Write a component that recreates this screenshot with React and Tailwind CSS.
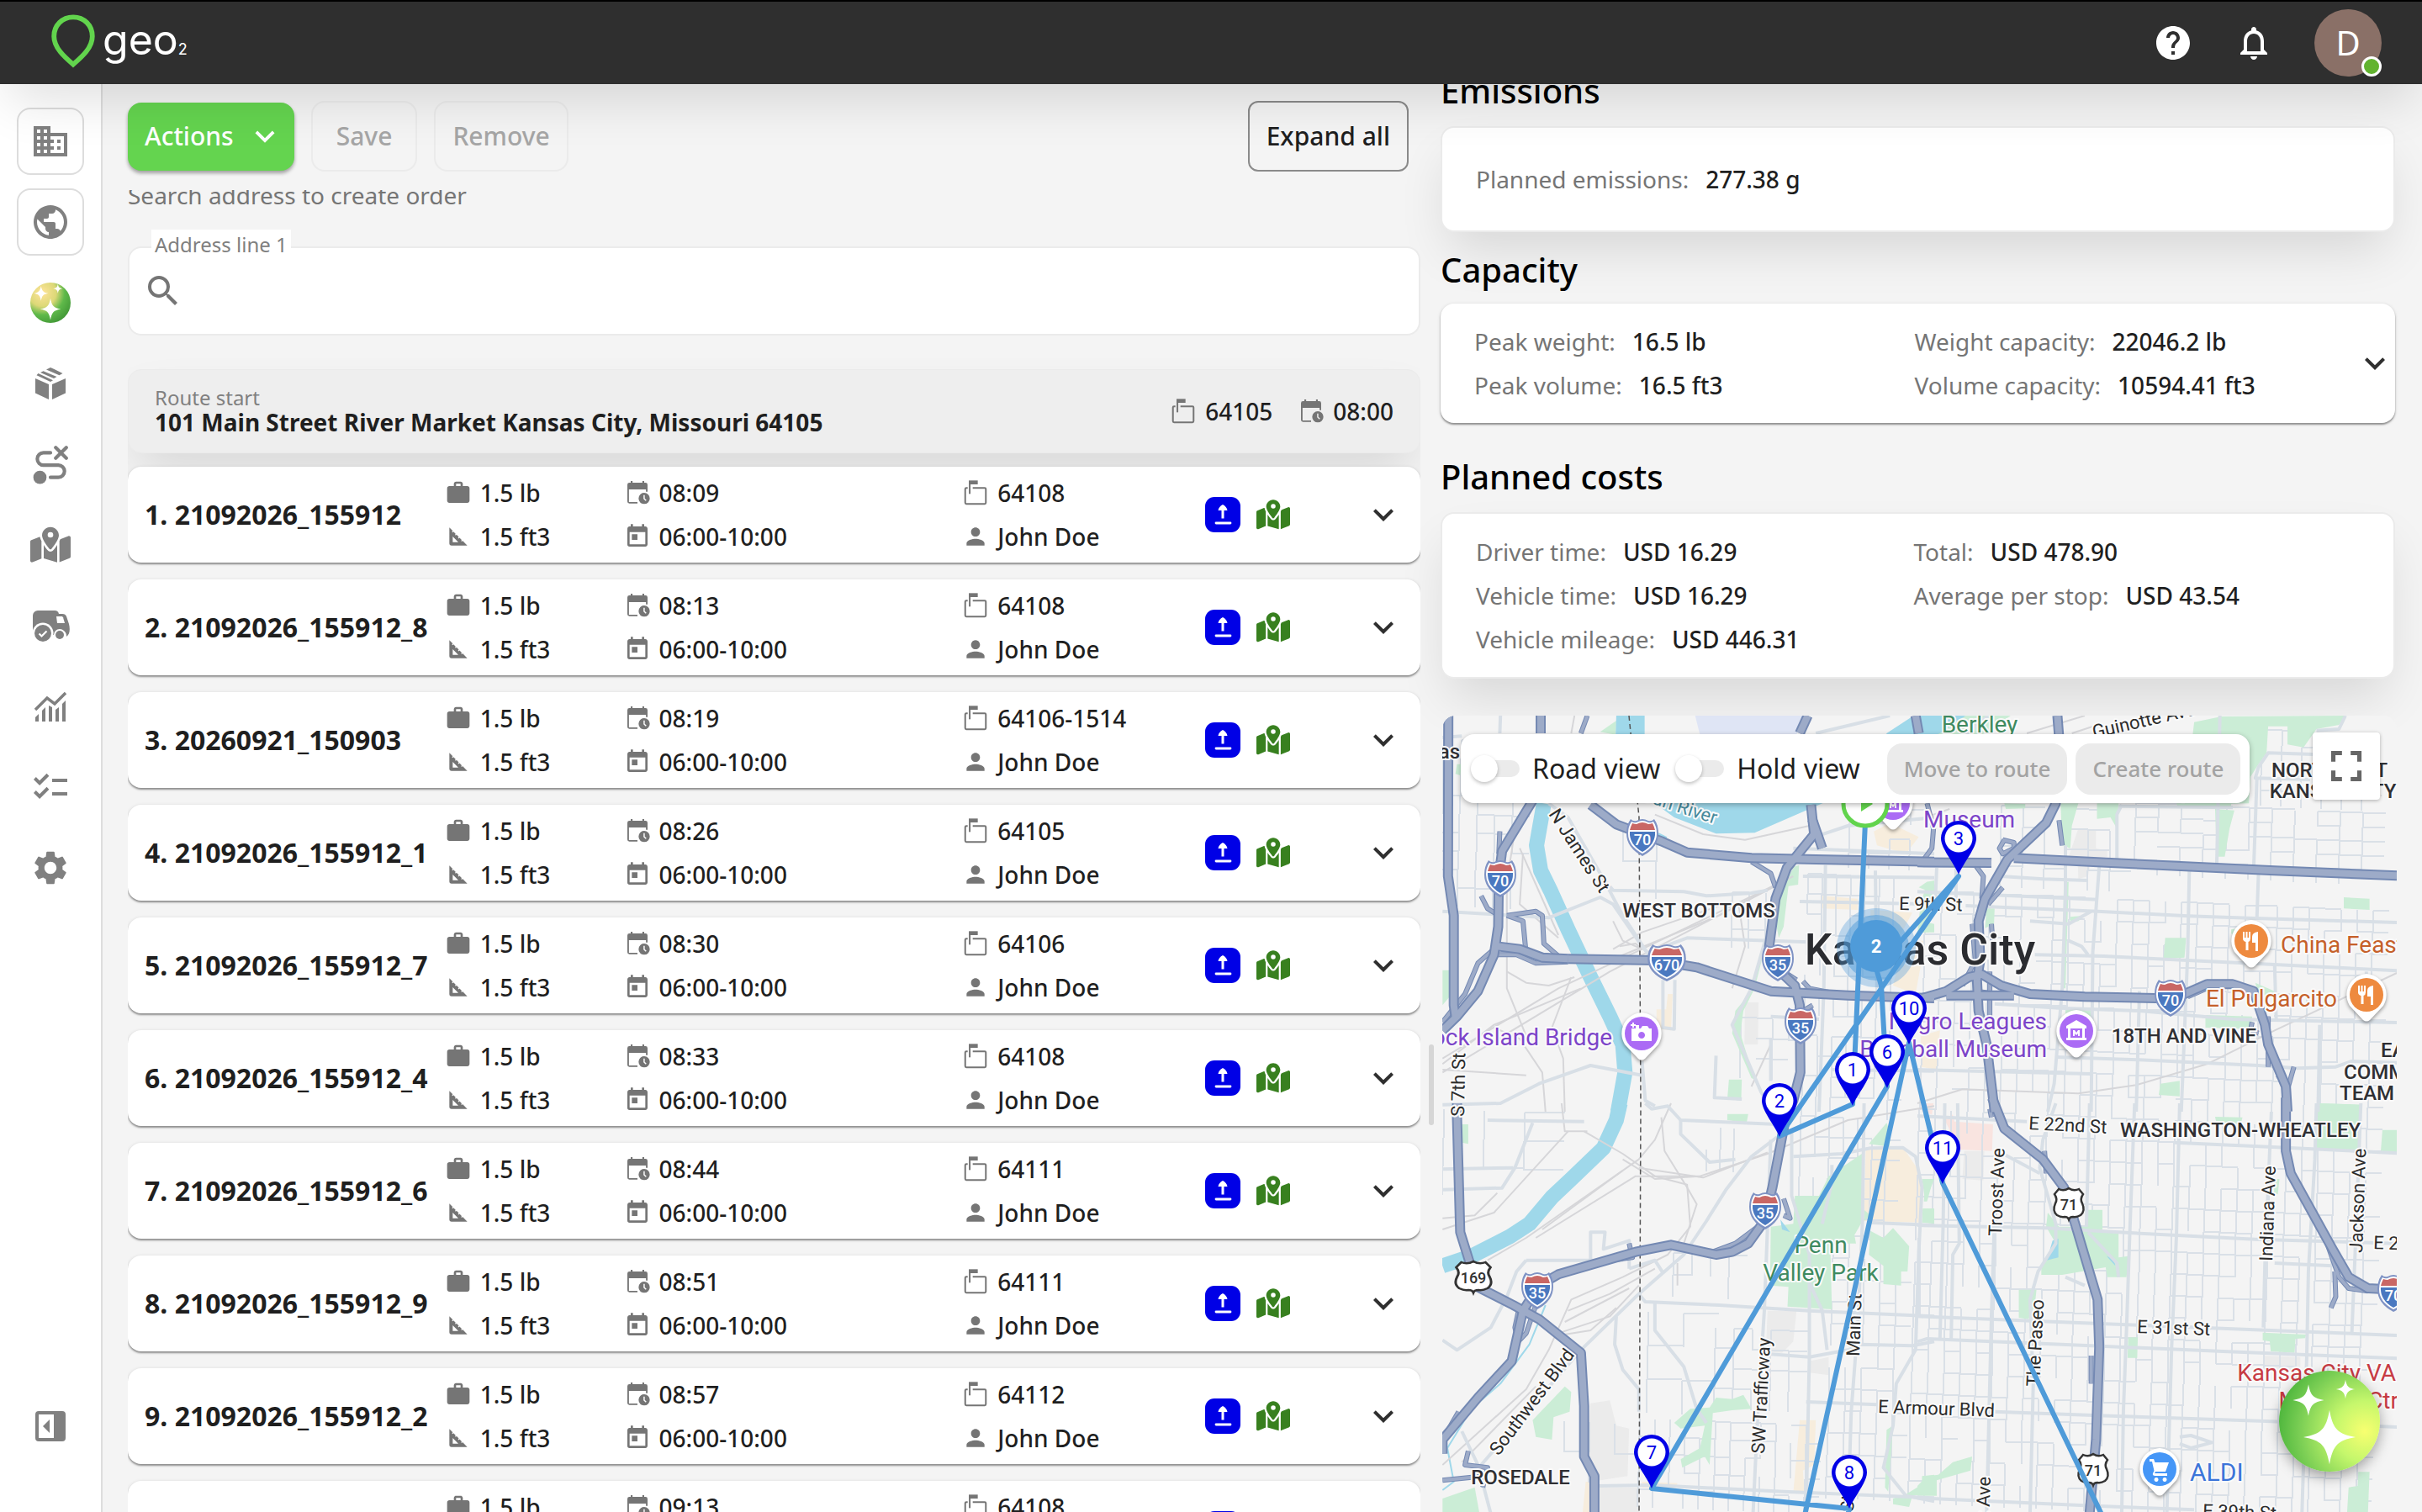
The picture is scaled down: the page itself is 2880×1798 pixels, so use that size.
import React from "react";
import {
  MdDomain, MdPublic, MdSearch, MdWork, MdToday, MdPerson, MdHelp, MdNotificationsNone,
  MdExpandMore, MdFullscreen, MdChecklist, MdSettings,
} from "react-icons/md";
import { FaMapLocationDot } from "react-icons/fa6";

const STOPS = [
  { id: "21092026_155912", time: "08:09", zip: "64108" },
  { id: "21092026_155912_8", time: "08:13", zip: "64108" },
  { id: "20260921_150903", time: "08:19", zip: "64106-1514" },
  { id: "21092026_155912_1", time: "08:26", zip: "64105" },
  { id: "21092026_155912_7", time: "08:30", zip: "64106" },
  { id: "21092026_155912_4", time: "08:33", zip: "64108" },
  { id: "21092026_155912_6", time: "08:44", zip: "64111" },
  { id: "21092026_155912_9", time: "08:51", zip: "64111" },
  { id: "21092026_155912_2", time: "08:57", zip: "64112" },
  { id: "21092026_155912_3", time: "09:13", zip: "64108" },
];

/* ---------- icons ---------- */

function CalendarClock({ className }) {
  return (
    <svg viewBox="0 0 24 24" className={className} fill="currentColor" aria-hidden="true">
      <path d="M6 1.5h1.6V3h8.8V1.5H18V3h1.2A1.8 1.8 0 0 1 21 4.800V11h-1.400V9H4.400v11.200H12v1.300H4.800A1.800 1.800 0 0 1 3 19.700V4.800A1.800 1.800 0 0 1 4.800 3H6z" />
      <path fillRule="evenodd" d="M18 12a5 5 0 1 1 0 10 5 5 0 0 1 0-10zm-.6 2v3.400l1.900 2 .8-.8-1.600-1.600V14z" />
    </svg>
  );
}

function Mailbox({ className }) {
  return (
    <svg viewBox="0 0 24 24" className={className} fill="none" stroke="currentColor" strokeWidth="1.5" aria-hidden="true">
      <path d="M5 7.700H3.800a1 1 0 0 0-1 1v12.200a1 1 0 0 0 1 1h16.400a1 1 0 0 0 1-1V8.700a1 1 0 0 0-1-1H9.500" />
      <path d="M6.800 13V1.500" />
      <path d="M6 1h8v3.500H6z" fill="currentColor" stroke="none" />
    </svg>
  );
}

function SetSquare({ className }) {
  return (
    <svg viewBox="0 0 24 24" className={className} fill="currentColor" aria-hidden="true">
      <path fillRule="evenodd" d="M4 4l3 3-.7.7.7.7.7-.7 2 2-.7.7.7.7.7-.7 2 2-.7.7.7.7.7-.7 2 2-.7.7.7.7.7-.7L20 20H6a2 2 0 0 1-2-2zm3 8v5h5z" />
    </svg>
  );
}

function PackageIcon() {
  return (
    <svg viewBox="0 0 40 40" className="size-10" aria-hidden="true">
      <path fill="#808080" d="M2 14l16 7v18L2 31.500zM38 14l-16 7v18l16-7.500z" />
      <path fill="#808080" d="M15 3.500L20 1l4.500 2L34.500 8l-4 2.200L15 3.500z" />
      <path fill="#808080" d="M11.500 5.200L27.500 12l-3.500 2L8 7z" />
      <path fill="#808080" d="M5 8.500l-1.500 1.800L20 18l3-1.800L5.500 8z" />
    </svg>
  );
}

function RouteIcon() {
  return (
    <svg viewBox="0 0 40 46" className="h-12 w-[42px]" fill="none" stroke="#808080" strokeWidth="4" strokeLinecap="round" aria-hidden="true">
      <path d="M20 10h-8a7 7 0 0 0 0 14h17a7 7 0 0 1 0 14h-9" />
      <path d="M26 4l12 12M38 4L26 16" />
      <circle cx="8" cy="38" r="7.500" fill="#808080" stroke="none" />
    </svg>
  );
}

function TruckIcon() {
  return (
    <svg viewBox="0 0 46 40" className="h-10 w-[46px]" aria-hidden="true">
      <path fill="#808080" d="M2 8a6 6 0 0 1 6-6h20a5 5 0 0 1 5 4h4c3 0 4 1 5 3l3 9c.5 2 .8 4 .8 6 0 4-.8 7-3.800 9a6.500 6.500 0 0 0-13-2H2z" />
      <path fill="#fff" d="M30 9h6c1 0 1.500.4 2 1.300L40 17h-9z" />
      <circle cx="14" cy="29" r="12.500" fill="#fff" />
      <circle cx="14" cy="29" r="10" fill="#808080" />
      <path d="M9.500 29.500l3 3 6-6" stroke="#fff" strokeWidth="2.200" fill="none" />
      <circle cx="34" cy="31" r="7" fill="#fff" />
      <circle cx="34" cy="31" r="5" fill="#808080" />
    </svg>
  );
}

function ChartIcon() {
  return (
    <svg viewBox="0 0 40 40" className="size-10" aria-hidden="true">
      <path d="M2 24l14-14 9 7L38 4" stroke="#808080" strokeWidth="3.500" fill="none" />
      <g fill="#808080">
        <path d="M2 33l4-4v9H2zM10 25l4-4v17h-4zM18 19l4 2v17h-4zM26 24l4-3v17h-4zM34 17l4-4v25h-4z" />
      </g>
    </svg>
  );
}

function CollapseIcon() {
  return (
    <svg viewBox="0 0 36 36" className="size-9" aria-hidden="true">
      <path fill="#808080" fillRule="evenodd" d="M4 0h28a4 4 0 0 1 4 4v28a4 4 0 0 1-4 4H4a4 4 0 0 1-4-4V4a4 4 0 0 1 4-4zm0 4v28h18V4zm5 14l8-8v16z" />
    </svg>
  );
}

const SPARK = "M0-34C4-10 10-4 31 0 10 4 4 10 0 34-4 10-10 4-31 0-10-4-4-10 0-34z";

function SparkleBall({ className, variant }) {
  const small = variant === "small";
  const id = small ? "ballSmall" : "ballLarge";
  return (
    <svg viewBox="0 0 120 120" className={className} aria-hidden="true">
      <defs>
        {small ? (
          <radialGradient id={id} cx="0.3" cy="0.25" r="0.85">
            <stop offset="0" stopColor="#ffe49a" />
            <stop offset="0.4" stopColor="#dcd877" />
            <stop offset="0.65" stopColor="#5fb94a" />
            <stop offset="1" stopColor="#3e9434" />
          </radialGradient>
        ) : (
          <radialGradient id={id} cx="0.85" cy="0.6" r="0.85">
            <stop offset="0" stopColor="#f8ff70" />
            <stop offset="0.35" stopColor="#c5f76c" />
            <stop offset="0.75" stopColor="#7ccf55" />
            <stop offset="1" stopColor="#52b83f" />
          </radialGradient>
        )}
      </defs>
      <circle cx="60" cy="60" r="60" fill={`url(#${id})`} />
      <g fill="#fff">
        <path d={SPARK} transform="translate(60 79) scale(1 .95)" />
        <path d={SPARK} transform={small ? "translate(32 32) scale(.7 .65)" : "translate(35 35) scale(.6 .55)"} />
        <path d={SPARK} transform={small ? "translate(82 18) scale(.45 .4)" : "translate(79 22) scale(.36 .33)"} />
      </g>
    </svg>
  );
}

/* ---------- header and sidebar ---------- */

function Header() {
  return (
    <header className="relative z-20 flex h-[100px] shrink-0 items-center justify-between border-t-2 border-black bg-[#2f2f2f] pr-12 pl-[60px] shadow-[0_30px_60px_-10px_rgba(0,0,0,0.12)]">
      <a href="#home" className="flex items-center gap-2 pb-1" aria-label="geo2">
        <svg viewBox="0 0 54 66" className="h-16 w-[54px]" fill="none" aria-hidden="true">
          <path d="M27 3.500c13.500 0 23.500 10 23.500 23.500C50.500 41 38 52 27 61.500 16 52 3.500 41 3.500 27 3.500 13.500 13.500 3.500 27 3.500z" stroke="#62d44d" strokeWidth="6" />
        </svg>
        <span className="flex items-end pb-1 font-['Inter',sans-serif] text-[50px] leading-[60px] text-white">
          geo<sub className="bottom-0 text-[18px] leading-[36px]">2</sub>
        </span>
      </a>
      <div className="flex items-center gap-12 text-white">
        <button type="button" aria-label="Help"><MdHelp className="size-12" /></button>
        <button type="button" aria-label="Notifications"><MdNotificationsNone className="size-12" /></button>
        <button type="button" aria-label="Account" className="relative flex size-20 items-center justify-center rounded-full bg-[#8a7067] text-[40px]">
          D
          <span className="absolute right-0 bottom-0 size-6 rounded-full border-[3px] border-white bg-[#62b32f]" />
        </button>
      </div>
    </header>
  );
}

const NAV = [
  { label: "Company", icon: <MdDomain className="size-12" />, boxed: true },
  { label: "Region", icon: <MdPublic className="size-12" />, boxed: true },
  { label: "Assistant", icon: <SparkleBall variant="small" className="size-12" /> },
  { label: "Orders", icon: <PackageIcon /> },
  { label: "Routes", icon: <RouteIcon /> },
  { label: "Map", icon: <FaMapLocationDot className="size-12" /> },
  { label: "Vehicles", icon: <TruckIcon /> },
  { label: "Reports", icon: <ChartIcon /> },
  { label: "Tasks", icon: <MdChecklist className="size-12" /> },
  { label: "Settings", icon: <MdSettings className="size-12" /> },
];

function Sidebar() {
  return (
    <nav className="flex w-[122px] shrink-0 flex-col items-center gap-4 border-r-2 border-[#dddddd] bg-white pt-7 pb-[62px] text-[#808080]">
      {NAV.map((n) => (
        <button
          key={n.label}
          type="button"
          aria-label={n.label}
          className={"flex size-20 shrink-0 items-center justify-center rounded-2xl " + (n.boxed ? "border-2 border-[#dddddd]" : "")}
        >
          {n.icon}
        </button>
      ))}
      <button type="button" aria-label="Collapse menu" className="mt-auto flex size-20 shrink-0 items-center justify-center">
        <CollapseIcon />
      </button>
    </nav>
  );
}

/* ---------- stop list ---------- */

function Fact({ icon, children }) {
  return (
    <div className="flex items-center gap-2.5">
      <span className="flex w-8 justify-center text-[#757575]">{icon}</span>
      <span className="whitespace-nowrap">{children}</span>
    </div>
  );
}

function StopRow({ index, stop }) {
  return (
    <li className="flex shrink-0 items-center rounded-2xl bg-white py-[5px] pr-5 pl-5 text-[28px] leading-[52px] font-medium shadow-[0_2px_2px_rgba(0,0,0,0.35),0_1px_4px_rgba(0,0,0,0.15)]">
      <div className="grid flex-1 grid-cols-[357fr_213fr_403fr_289fr] items-center">
        <h3 className="text-[32px] font-bold whitespace-nowrap">{index}. {stop.id}</h3>
        <div>
          <Fact icon={<MdWork className="size-8" />}>1.5 lb</Fact>
          <Fact icon={<SetSquare className="size-8" />}>1.5 ft3</Fact>
        </div>
        <div>
          <Fact icon={<CalendarClock className="size-8" />}>{stop.time}</Fact>
          <Fact icon={<MdToday className="size-8" />}>06:00-10:00</Fact>
        </div>
        <div>
          <Fact icon={<Mailbox className="size-8" />}>{stop.zip}</Fact>
          <Fact icon={<MdPerson className="size-8" />}>John Doe</Fact>
        </div>
      </div>
      <div className="flex w-[188px] items-center gap-[19px]">
        <svg viewBox="0 0 42 42" className="size-[42px]" aria-label="Delivery">
          <rect width="42" height="42" rx="11" fill="#0000e6" />
          <path d="M21 9c3 1.500 5 4 5.500 7H22.500v9.500h-3V16h-4c.5-3 2.500-5.500 5.500-7z" fill="#fff" />
          <path d="M13 31h17" stroke="#fff" strokeWidth="2.800" strokeLinecap="round" />
        </svg>
        <FaMapLocationDot className="size-10 text-[#38801f]" />
      </div>
      <button type="button" aria-label="Expand stop" className="flex size-12 items-center justify-center text-[#2f2f2f]">
        <MdExpandMore className="size-12" />
      </button>
    </li>
  );
}

function StopsPanel() {
  return (
    <section className="flex min-h-0 min-w-0 flex-col">
      <div className="flex h-[126px] shrink-0 items-center justify-between pt-2 pr-3.5 pb-2.5 text-[30px] leading-[40px] font-medium">
        <div className="flex items-center gap-5">
          <button type="button" className="flex h-[81px] items-center gap-3.5 rounded-2xl bg-[#64d44f] pr-3 pl-5 text-white shadow-[0_3px_4px_rgba(0,0,0,0.35)]">
            Actions
            <MdExpandMore className="size-[46px]" />
          </button>
          <button type="button" disabled className="h-[84px] rounded-2xl border-2 border-[#ebebeb] px-7 text-[#a6a6a6]">Save</button>
          <button type="button" disabled className="h-[84px] rounded-2xl border-2 border-[#ebebeb] px-5 text-[#a6a6a6]">Remove</button>
        </div>
        <button type="button" className="h-[84px] rounded-xl border-2 border-[#8a8a8a] px-5">Expand all</button>
      </div>
      <div className="min-h-0 flex-1 overflow-hidden">
        <div className="-mt-4 flex flex-col">
          <p className="text-[28px] leading-[44px] text-[#757575]">Search address to create order</p>
          <div className="relative mt-[39px] flex h-[106px] items-center rounded-2xl border-2 border-[#ebebeb] bg-white pl-4">
            <label htmlFor="address" className="absolute -top-[22px] left-[26px] bg-white px-1 text-[24px] leading-[36px] text-[#808080]">Address line 1</label>
            <MdSearch className="size-12 shrink-0 text-[#757575]" />
            <input id="address" type="text" className="h-full min-w-0 flex-1 bg-transparent px-4 text-[28px] outline-none" />
          </div>
          <div className="mt-10 flex h-[100px] items-center justify-between rounded-2xl border border-[#ebebeb] bg-[#eeeeee] px-[31px] shadow-[0_30px_60px_-10px_rgba(0,0,0,0.12)]">
            <div className="pb-0.5">
              <p className="text-[24px] leading-[28px] text-[#808080]">Route start</p>
              <p className="text-[28px] leading-[30px] font-bold">101 Main Street River Market Kansas City, Missouri 64105</p>
            </div>
            <div className="flex gap-[30px] text-[28px] leading-[52px] font-medium">
              <Fact icon={<Mailbox className="size-8" />}>64105</Fact>
              <Fact icon={<CalendarClock className="size-8" />}>08:00</Fact>
            </div>
          </div>
          <ol className="relative mt-4 flex flex-col gap-5">
            {STOPS.map((s, i) => <StopRow key={s.id} index={i + 1} stop={s} />)}
          </ol>
        </div>
      </div>
    </section>
  );
}

/* ---------- summary cards ---------- */

function Metric({ label, children }) {
  return (
    <div className="flex gap-5 whitespace-nowrap">
      <dt className="text-[#757575]">{label}</dt>
      <dd className="font-medium">{children}</dd>
    </div>
  );
}

function SummaryHeading({ children }) {
  return <h2 className="text-[40px] leading-[56px] font-medium text-black">{children}</h2>;
}

const SOFT = "rounded-2xl border-2 border-[#ebebeb] bg-white shadow-[0_30px_60px_-10px_rgba(0,0,0,0.12)]";

/* ---------- map ---------- */

/* Each tile keeps its own local units; the Layer component scales them to the 600 x 480 tile area. */
const TILES = [
  {
    x: 1700, y: 840,
    park: [
      "530,85 580,45 578,95", "1120,570 1148,560 1145,630 1115,635 1100,780 1085,820 1065,700 1085,620",
      "1045,840 1020,920 1000,1010 950,1080 940,1160 1000,1320 1010,1325 965,1160 975,1080 1010,1000",
      "930,1325 970,1325 968,1400 925,1395", "40,935 62,935 62,1030 40,1060", "1530,760 1568,770 1568,800 1530,800",
      "1545,620 1568,615 1568,660 1520,640", "85,200 100,200 95,240 80,235",
    ],
    water: [
      "580,27 668,27 668,95 578,95",
      "640,300 700,340 760,390 890,448 1010,445 1210,345 1300,300 1400,180 1420,90 1500,30 1568,27 1568,100 1500,200 1200,300 900,320",
      "712,445 738,460 733,472 705,460",
    ],
    lavender: ["825,27 1160,27 1140,95 840,95"],
    beige: [
      "1380,440 1430,410 1520,460 1480,520 1390,490", "1490,830 1540,830 1510,1020 1440,990 1460,900",
      "740,1020 755,1020 750,1150 705,1145 705,1075 735,1075", "1220,670 1330,680 1330,720 1220,715", "1370,720 1500,730 1420,900 1370,760",
    ],
    grey: ["980,1050 1022,1050 1020,1200 978,1200"],
    river: ["355,340 332,490 345,580 375,650 430,790 500,960 560,1100 600,1200 607,1300 585,1440"],
    rail: [
      "270,400 240,620 240,1000 300,1170", "280,500 400,810", "1130,600 660,860 400,1000 40,1250", "1100,620 560,940 40,1300",
      "440,960 380,1140 415,1250 420,1440", "40,1290 300,1310", "40,1270 200,1130 470,1000", "700,380 850,450 980,470 1180,420", "960,700 980,850 940,1000",
      "570,860 660,800 940,690", "240,940 300,980 370,990 450,960", "290,520 280,700 400,820", "450,27 440,90", "560,900 900,740 1060,640",
      "200,1140 280,1180 350,1300 360,1440", "1000,1350 1060,1200", "570,760 600,830 660,860 640,840 590,850",
    ],
    road: [
      "40,725 370,748 530,675 570,700 660,850 675,870", "370,340 430,390 540,610 570,650 790,655 860,670 1000,660 1050,650",
      "730,850 800,820 1180,835", "40,1415 220,1410 340,1340 500,1275 660,1310", "660,1260 670,1400 700,1420",
      "1230,560 1225,1000 1210,1440", "1385,580 1390,1000", "1140,540 1090,640 1000,1000 940,1130 1030,1370 1070,1440",
      "40,105 100,100", "1250,1290 1568,1295", "725,970 725,1140 760,1145 762,970", "540,610 600,740 680,880",
      "1160,600 1568,605", "1150,690 1568,700", "1130,500 1568,520", "1430,27 1200,90", "220,27 218,90", "1195,460 1300,420 1568,390",
      "1060,1100 1210,1110", "890,1240 885,1390 970,1395", "1060,1180 1060,1330",
    ],
    hwyThin: [
      "205,880 270,880 330,910 430,905", "160,670 180,715 215,740", "240,740 290,760 300,880", "240,740 330,725 350,740 355,840 410,895",
      "1000,548 1060,590 1075,640", "1195,440 1150,500 1130,540", "210,850 150,910 110,1020 40,1120",
      "1160,975 1180,1000 1290,1025", "1100,940 1140,970", "1190,1060 1160,1080", "218,440 215,520", "490,27 470,90",
    ],
    hwy: [
      "58,27 57,600 75,740 75,1060 80,1100", "320,330 225,510 215,600 213,780 200,880 150,1010 85,1100 40,1150", "345,27 345,90",
      "500,345 580,415 720,475 800,515 1000,535 1200,540 1568,548",
      "430,895 700,900 830,925 1060,1010 1300,1025 1420,1030 1568,1035", "210,850 280,860 350,890 430,895", "1175,27 1150,90", "1510,27 1520,90",
      "1185,345 1190,400 1220,500", "1190,400 1195,450 1110,570 1075,680 1055,850 1080,930 1135,990 1150,1060 1152,1300 1130,1400 1115,1440",
    ],
    creek: [],
  },
  {
    x: 2280, y: 840,
    park: [
      "150,27 290,27 200,95 0,130", "860,50 945,30 1330,27 1310,60 1240,75 1200,140 1150,130 1150,65 1090,65 1085,160 1060,200 1035,245 1030,340 830,345",
      "445,340 500,340 480,420 475,500 450,490", "558,340 625,340 620,430 600,390 558,395", "805,340 975,340 975,350 810,355",
      "925,360 985,365 970,430 955,530 930,530", "1325,675 1405,680 1405,720 1325,715", "770,820 835,820 830,890 765,895",
      "895,1095 1040,1100 1040,1145 895,1140", "460,1075 545,1078 545,1110 460,1095", "755,1340 815,1330 815,1385 750,1380",
      "1247,1410 1375,1415 1375,1440 1247,1440", "270,340 335,342 335,358 275,360", "475,745 520,740 500,760 475,765",
      "215,715 240,715 238,770 210,785", "705,545 740,545 738,575 705,570", "30,620 48,620 45,700 35,800 0,800 10,700",
      "455,620 470,620 460,1000 450,1000", "1050,980 1110,1010 1100,1030 1060,1020", "975,790 1000,785 990,810 975,805",
    ],
    water: ["0,27 150,27 70,90 0,120"],
    lavender: [],
    beige: ["10,1170 70,1150 60,1290 10,1280"],
    grey: ["500,430 555,435 555,500 590,510 590,530 540,540 530,600 500,610 498,540 470,530"],
    river: [],
    rail: ["0,1410 140,1360 500,1375 680,1345 900,1270 1110,1150 1490,945", "340,90 520,27", "560,60 480,90", "0,400 100,360"],
    road: [
      "0,655 560,683", "150,705 560,725 840,742 1050,750 1490,765", "365,880 580,885 840,900 1110,915 1490,937",
      "240,1055 440,1070 690,1080 980,1110 1490,1122", "0,1290 540,1305", "430,1245 690,1255 1060,1275 1180,1285 1300,1280 1350,1260 1490,1265",
      "460,490 460,660 450,1000 425,1340 405,1440", "845,575 840,870 820,1440", "1060,585 1055,750", "1110,915 1115,1110",
      "1055,250 1045,570", "940,27 930,570", "565,565 545,870 540,1440", "690,1010 680,1440", "1395,940 1395,1120",
      "1230,165 1090,160 1060,210 1050,250 1220,255", "260,600 390,610 530,615", "350,760 470,770 540,725", "470,830 510,850 530,880",
      "635,345 620,380 620,540", "625,350 980,355", "1330,27 1310,75 1240,80", "1250,1130 1245,1440", "150,95 220,27", "60,570 55,700", "120,570 120,720",
    ],
    hwyThin: [
      "30,340 50,430 45,500 20,540", "270,470 255,500 265,520 300,500 300,480 265,470", "90,550 180,560 205,600 200,680",
      "180,1010 290,1025", "225,940 225,1100", "180,940 180,1040", "1120,1310 1150,1360 1170,1280", "230,770 235,850", "170,770 180,900 140,990",
      "840,1030 900,1000", "1040,1120 1035,1150 1060,1160", "440,400 450,490", "265,640 220,700", "1090,1100 1090,1280",
    ],
    hwy: [
      "435,27 440,100 430,340 400,410 280,540 210,680 190,760 195,900 185,970 190,1080 215,1200 240,1440", "0,550 230,552",
      "300,535 560,550 930,570 1110,580 1490,598",
      "0,1040 90,1010 160,960 200,950 260,990 350,1020 520,1030 740,1035 830,1020 900,985 980,985 1045,1010 1080,1130 1090,1200 1145,1350 1150,1440",
      "90,1025 300,1025",
    ],
    creek: [],
  },
  {
    x: 1700, y: 1310,
    park: [
      "1135,330 1210,330 1240,260 1350,175 1345,420 1320,470 1325,500 1245,500 1250,735 1112,725 1115,655 1058,650 1060,440 1130,430",
      "1370,455 1410,480 1440,445 1490,510 1485,600 1465,600 1465,650 1410,645 1410,580 1365,540", "1365,145 1420,70 1430,100 1430,155",
      "1530,270 1568,270 1540,350", "1532,375 1568,375 1568,430 1530,425", "925,38 990,38 985,70 925,60", "100,75 120,75 120,145 100,140",
      "320,1130 420,1010 440,1030 435,1100 385,1120 380,1200 330,1190",
      "760,1140 810,1090 870,1085 890,1050 940,1055 975,1040 1000,1090 940,1095 880,1105 870,1290 855,1260 785,1300 780,1270 840,1230 855,1150 780,1160",
      "40,1410 140,1370 155,1464 40,1464", "1420,1165 1440,1150 1425,1385 1415,1370", "1440,1410 1480,1395 1530,1360 1530,1330 1568,1325 1568,1390 1500,1400 1490,1440 1440,1430",
      "1350,380 1370,400 1350,420",
    ],
    water: ["1090,415 1120,460 1095,450"],
    lavender: [],
    beige: ["1355,165 1475,165 1520,240 1530,300 1525,425 1350,420", "1150,1130 1200,1130 1195,1290 1160,1310 1165,1390 1130,1390", "485,1350 525,1350 525,1464 475,1464", "660,1350 770,1355 765,1375 660,1370"],
    grey: ["1050,740 1140,740 1130,850 1095,890 1045,885", "1180,920 1240,905 1240,970 1175,960", "500,1070 560,1060 580,1150 620,1160 615,1330 500,1350 490,1200", "525,1370 650,1370 650,1464 525,1464"],
    river: ["592,0 580,60 540,160 440,270 380,335 310,430 250,475 130,545 40,580"],
    rail: [
      "750,0 700,130 650,200 300,480 180,560", "480,100 600,180 700,260 800,290 810,440 740,540 600,620 440,700 370,880 300,1020 40,1290",
      "40,450 200,390 430,100", "40,410 140,400 210,320", "720,50 730,170 800,300 830,360 790,500", "600,200 700,270 840,260 1050,180 1300,60 1568,10",
      "650,230 850,265 1050,175", "410,0 420,100 490,100", "350,450 600,240", "330,480 640,260 840,260", "400,820 560,760 650,650", "420,780 620,660",
      "430,740 560,680 700,590", "390,830 500,810 580,730", "770,570 770,650", "100,1280 330,1010",
    ],
    road: [
      "670,0 690,20 740,10 780,60 1080,75", "1130,190 1280,180 1370,160 1470,158 1510,190 1530,300 1520,530 1510,880 1450,1000 1440,1150 1410,1300 1480,1400 1568,1420",
      "1080,120 1000,190 920,310 860,420 790,540 650,680 470,880 160,1290", "300,560 500,560 600,560", "650,680 670,708 900,720 1180,740 1568,760",
      "1060,130 1050,440 1040,740 1020,1100 1005,1464", "1125,100 1125,330 1180,540 1180,740 1180,900 1170,1464",
      "1350,0 1345,420 1330,800 1310,1100 1300,1464", "1060,895 1180,905 1300,880 1340,860 1500,865 1568,850", "520,1365 690,1362 1100,1385 1568,1408",
      "1170,1065 1390,1075", "1360,425 1568,435", "40,845 85,880 190,800 240,690 270,600 300,560", "580,760 575,860 600,950 650,1020 650,1100",
      "100,1170 150,1290 190,1464", "500,560 500,460 545,460 540,520 620,490 620,590", "620,590 700,560 725,605", "700,710 700,810 790,940 830,1090 860,1140",
      "180,60 480,65", "40,235 260,230", "40,308 225,302 265,230 320,70", "1220,430 1250,280 1250,220", "780,60 780,110 870,210 950,200",
      "1180,640 1220,740 1235,880",
    ],
    hwyThin: [
      "280,720 265,800 275,850 300,820 330,720", "40,1345 170,1330", "120,1240 110,1290 180,1300 165,1370", "620,500 630,550 560,560", "1100,340 1120,410 1100,400",
      "880,530 950,500 1020,440", "90,1100 50,1180",
    ],
    hwy: [
      "85,50 95,460 125,570 140,650 260,720 340,770 470,890 480,1080 480,1260 512,1330 512,1464", "85,0 85,50",
      "1120,-30 1095,120 1065,300 1040,420 990,500 940,530 890,540 750,505 640,530 400,610 340,650 290,740 255,920 150,1050 40,1200 40,1250",
    ],
    creek: ["360,720 310,860 220,1000 130,1090 55,1230 75,1350 40,1380"],
  },
  {
    x: 2280, y: 1310,
    park: [
      "1243,0 1375,5 1370,170 1240,160", "1445,95 1490,95 1490,175 1440,170", "925,48 1010,50 1005,75 930,75",
      "530,380 575,380 575,455 625,465 625,550 655,545 650,620 590,620 585,585 450,612 385,612 385,580 430,500 400,440 405,390 440,440 525,440",
      "315,665 370,665 365,720 345,770 315,765", "20,375 45,378 45,425 15,425", "25,270 48,275 30,350 20,350", "655,835 685,835 683,908 653,908",
      "1073,818 1208,825 1205,838 1175,840 1172,890 1098,885 1095,850 1073,845", "1370,1315 1405,1315 1400,1464 1335,1464 1340,1370 1368,1365",
      "0,1365 30,1330 65,1325 110,1280 170,1260 165,1310 60,1345 60,1400 0,1400", "1110,270 1125,270 1120,325 1108,320",
    ],
    water: ["420,490 438,483 438,550 402,560", "588,545 610,555 615,580"],
    lavender: [],
    beige: ["0,270 10,280 5,420 0,420"],
    grey: ["145,170 208,170 205,275 140,270", "1075,900 1190,905 1190,960 1075,950"],
    pink: ["85,60 110,40 115,65 235,75 232,170 130,165", "10,0 50,0 45,40 15,30"],
    river: [],
    rail: [],
    road: [
      "0,435 400,445 660,462 1050,485 1490,500", "0,45 340,65", "800,140 1090,155 1490,178", "0,760 550,785 880,800 1490,828",
      "0,850 30,840 540,865 950,885 1490,910", "240,1100 600,1115 1100,1135 1490,1155", "0,1408 520,1435 860,1450",
      "675,0 660,460 650,800 640,1100 635,1464", "815,0 805,470 790,870 775,1464", "1240,0 1235,200 1215,600 1210,900 1195,1464", "1100,30 1080,570 1075,800",
      "5,480 5,760", "85,0 80,430 70,840", "125,0 130,500 110,540 105,840", "240,400 230,760 215,1464", "535,0 525,440",
      "430,0 390,130 380,230 405,330 430,430 430,500 375,600 350,700 360,1000 350,1464", "1378,0 1360,540 1350,820", "1110,570 1290,580", "460,620 520,650",
      "530,460 620,570 625,620", "815,1190 850,1185 915,1210 850,1230 815,1215", "250,170 380,250",
    ],
    hwyThin: ["1255,440 1310,620 1340,660 1400,670", "1297,600 1300,690 1285,730", "395,170 400,250", "540,900 540,1000", "225,20 230,50"],
    hwy: [
      "232,-20 270,90 390,200 455,300 490,430 560,700 565,870 555,1200 535,1464",
      "1145,-20 1145,170 1160,250 1290,520 1340,620 1400,660 1490,665",
    ],
    creek: [],
  },
];

/* Blocks of side streets: x, y, width, height, column step, row step. */
const BLOCKS = [
  [1717, 880, 110, 210, 21, 22], [1717, 1320, 150, 110, 48, 34], [2150, 1040, 130, 440, 17, 24], [2180, 1470, 110, 330, 19, 26],
  [2290, 1070, 560, 730, 19, 26], [2380, 960, 160, 110, 26, 24], [2540, 960, 310, 100, 27, 17], [2690, 870, 160, 90, 24, 18],
  [1950, 1690, 230, 108, 18, 21], [2040, 1580, 120, 110, 22, 24], [1990, 1490, 90, 60, 22, 26], [2060, 1060, 60, 80, 20, 22], [2070, 1210, 80, 80, 19, 24],
  [1960, 1560, 100, 130, 42, 40], [2200, 960, 110, 80, 24, 18], [1930, 980, 110, 90, 40, 44], [1860, 1690, 90, 100, 30, 36], [2030, 1340, 60, 60, 16, 26],
];

function buildSideStreets() {
  let seed = 7;
  const rand = () => {
    seed = (seed * 1103515245 + 12345) % 2147483648;
    return seed / 2147483648;
  };
  let d = "";
  for (const [x, y, w, h, dx, dy] of BLOCKS) {
    for (let cy = 0; cy <= h - dy; cy += dy) {
      for (let cx = 0; cx <= w - dx; cx += dx) {
        const px = Math.round(x + cx - cy * 0.03);
        const py = Math.round(y + cy + (cx - w / 2) * 0.045);
        if (rand() > 0.15) d += `M${px} ${py}v${dy}`;
        if (rand() > 0.4) d += `M${px} ${py}h${dx}`;
      }
    }
  }
  return d;
}

const SIDE_STREETS = buildSideStreets();

function Layer({ name, kind = "line", ...style }) {
  return TILES.map((t) => (
    <g key={t.x + "-" + t.y} transform={`translate(${t.x} ${t.y}) scale(.38265 .33333)`} {...style}>
      {(t[name] || []).map((pts) =>
        kind === "area"
          ? <polygon key={pts} points={pts} />
          : <polyline key={pts} points={pts} fill="none" strokeLinejoin="round" vectorEffect="non-scaling-stroke" />
      )}
    </g>
  ));
}

function Interstate({ x, y, n }) {
  const wide = n.length > 2;
  return (
    <g transform={`translate(${x} ${y})`}>
      <g transform={wide ? "scale(1.2 1)" : undefined}>
        <path d="M-14-21q3 3 7 2 4-2 7-2t7 2q4 1 7-2 5 7 5 17 0 17-19 27Q-19 13-19-4q0-10 5-17z" fill="#7f93c4" />
        <path d="M-13-18q3 2 6 1 4-2 7-2t7 2q3 1 6-1 4 6 4 14 0 15-17 24Q-17 11-17-4q0-8 4-14z" fill="#fff" />
        <path d="M-12-16q3 1 5 1 4-2 7-2t7 2q2 0 5-1 2 4 3 8h-30q1-4 3-8z" fill="#c96765" />
        <path d="M-15-6h30q1 15-15 24Q-16 9-15-6z" fill="#4a78c0" />
      </g>
      <text y="10" textAnchor="middle" className="fill-white font-['Roboto',sans-serif] text-[18px] font-medium">{n}</text>
    </g>
  );
}

function UsShield({ x, y, n }) {
  return (
    <g transform={`translate(${x} ${y})`}>
      <path
        transform={n.length > 2 ? "scale(1.2 1)" : undefined}
        d="M-12-18q6 3 12-1 6 4 12 1l5 6q-4 6-1 11 4 9-2 14-5 3-9 2-4 0-5 3-1-3-5-3-4 1-9-2-6-5-2-14 3-5-1-11z"
        fill="#fff" stroke="#333" strokeWidth="2.500"
      />
      <text y="7" textAnchor="middle" className="fill-[#333] font-['Roboto',sans-serif] text-[18px] font-medium">{n}</text>
    </g>
  );
}

const GLYPHS = {
  camera: <path fillRule="evenodd" d="M-12-6h5v-4h4v4h2l2-3h6l2 3h3v15h-24zM0-2a4 4 0 1 0 .1 0zM-11-13h2v2h2v2h-2v2h-2v-2h-2v-2h2z" />,
  museum: <path fillRule="evenodd" d="M0-13L12-6v3h-2V8h2v3h-24V8h2V-3h-2v-3zM-7-3V8H7V-3zM-4 6V-1h2L0 2l2-3h2v7H2V3L0 5l-2-2v3z" />,
  food: <path d="M-10-11h2v7h1.500v-7h2v7H-3v-7h2v8q0 3-2.500 4v10h-3v-10q-3.500-1-3.500-4zM8-11V12H5V2H1v-7q0-5 7-6z" />,
  cart: <path d="M-12-12h5l1.500 4H11L7 3H-5l-1 2H9v3h-14q-4 0-3-3l1.500-3L-9-9h-3zM-4 10a2.500 2.500 0 1 0 .1 0zM6 10a2.500 2.500 0 1 0 .1 0z" />,
};

function Place({ x, y, color, glyph }) {
  return (
    <g transform={`translate(${x} ${y})`}>
      <path d="M0-25A25 25 0 0 1 20 13L4 30q-4 3-8 0l-16-17A25 25 0 0 1 0-25z" fill="#fff" className="drop-shadow-[0_2px_2px_rgba(0,0,0,0.4)]" />
      <circle r="20" fill={color} />
      <g fill="#fff">{GLYPHS[glyph]}</g>
    </g>
  );
}

function StopPin({ x, y, n }) {
  return (
    <g transform={`translate(${x} ${y})`}>
      <path d="M0-21A21 21 0 0 1 21 0C21 12 5 30 0 43-5 30-21 12-21 0A21 21 0 0 1 0-21z" fill="#0000e6" />
      <circle r="16.500" fill="#fff" />
      <text y="8" textAnchor="middle" className="fill-[#0000e6] font-['Roboto',sans-serif] text-[22px]">{n}</text>
    </g>
  );
}

const TONES = {
  street: "fill-[#2c2c2c] text-[22px]",
  area: "fill-[#2f2f33] text-[24px] font-medium",
  city: "fill-[#2b2c30] text-[52px] font-medium",
  violet: "fill-[#7c44c9] text-[28px]",
  orange: "fill-[#c5602a] text-[28px]",
  green: "fill-[#3f8a60] text-[28px]",
  river: "fill-[#45899b] text-[22px]",
  red: "fill-[#c73b44] text-[28px]",
  blue: "fill-[#3b74d9] text-[30px]",
};

/* text, x, y, tone, anchor, rotation */
const LABELS = [
  ["Kansas City", 2283, 1145, "city", "middle", 0],
  ["WEST BOTTOMS", 2020, 1089, "area", "middle", 0],
  ["18TH AND VINE", 2597, 1238, "area", "middle", 0],
  ["NORTHEAST", 2770, 922, "area", "middle", 0],
  ["KANSAS CITY", 2774, 947, "area", "middle", 0],
  ["EAST", 2831, 1255, "area", "start", 0],
  ["COMMUNITY", 2787, 1281, "area", "start", 0],
  ["TEAM", 2782, 1306, "area", "start", 0],
  ["WASHINGTON-WHEATLEY", 2664, 1350, "area", "middle", 0],
  ["ROSEDALE", 1808, 1763, "area", "middle", 0],
  ["Kansas", 1736, 900, "area", "end", 0],
  ["E 9th St", 2258, 1080, "street", "start", 1],
  ["N James St", 1841, 966, "street", "start", 57],
  ["S 7th St", 1741, 1326, "street", "start", -89],
  ["Guinotte Ave", 2490, 876, "street", "start", -13],
  ["Southwest Blvd", 1782, 1730, "street", "start", -53],
  ["SW Trafficway", 2098, 1727, "street", "start", -87],
  ["Main St", 2211, 1611, "street", "start", -88],
  ["Main St", 2202, 1850, "street", "start", -88],
  ["E Armour Blvd", 2233, 1678, "street", "start", 2],
  ["E 22nd St", 2412, 1341, "street", "start", 3],
  ["Troost Ave", 2380, 1468, "street", "start", -88],
  ["The Paseo", 2425, 1647, "street", "start", -87],
  ["Indiana Ave", 2702, 1498, "street", "start", -88],
  ["Jackson Ave", 2809, 1488, "street", "start", -88],
  ["E 27th St", 2822, 1483, "street", "start", 2],
  ["E 31st St", 2541, 1583, "street", "start", 2],
  ["E 39th St", 2619, 1802, "street", "start", 2],
  ["Troost Ave", 2367, 1754, "street", "end", -88],
  ["Missouri River", 2039, 978, "river", "end", 18],
  ["Rock Island Bridge", 1917, 1241, "violet", "end", 0],
  ["Museum", 2287, 982, "violet", "start", 0],
  ["Negro Leagues", 2434, 1222, "violet", "end", 0],
  ["Baseball Museum", 2434, 1255, "violet", "end", 0],
  ["China Feast", 2712, 1131, "orange", "start", 0],
  ["El Pulgarcito", 2779, 1195, "orange", "end", 0],
  ["Berkley", 2354, 869, "green", "middle", 0],
  ["Penn", 2165, 1488, "green", "middle", 0],
  ["Valley Park", 2165, 1521, "green", "middle", 0],
  ["Kansas City VA", 2849, 1640, "red", "end", 0],
  ["Medical Ctr", 2852, 1673, "red", "end", 0],
  ["ALDI", 2604, 1759, "blue", "start", 0],
];

function RouteMap() {
  return (
    <svg viewBox="1715 849 1135 949" preserveAspectRatio="xMinYMin slice" className="block h-full w-full" role="img" aria-label="Route map of Kansas City">
      <rect x="1715" y="849" width="1135" height="949" fill="#f4f4f4" />
      <Layer name="grey" kind="area" fill="#ebebeb" />
      <Layer name="beige" kind="area" fill="#f7eddd" />
      <Layer name="pink" kind="area" fill="#f9e4e0" />
      <Layer name="lavender" kind="area" fill="#dfe5f5" />
      <path d={SIDE_STREETS} fill="none" stroke="#dae0e7" strokeWidth="2" />
      <Layer name="park" kind="area" fill="#cbedd6" />
      <Layer name="water" kind="area" fill="#9fd8ea" />
      <Layer name="river" stroke="#9fd8ea" strokeWidth="18" />
      <Layer name="creek" stroke="#9fd8ea" strokeWidth="2" />
      <Layer name="rail" stroke="#d6d6d9" strokeWidth="2" />
      <Layer name="road" stroke="#d8dfe6" strokeWidth="4" />
      <path d="M1937 849L1949 970 1951 1310 1949 1798" fill="none" stroke="#555" strokeWidth="1.500" strokeDasharray="6 4" />
      <Layer name="hwyThin" stroke="#7489b3" strokeWidth="6" />
      <Layer name="hwyThin" stroke="#9dabc8" strokeWidth="4" />
      <Layer name="hwy" stroke="#7489b3" strokeWidth="12" />
      <Layer name="hwy" stroke="#9dabc8" strokeWidth="8" />

      {LABELS.map(([text, x, y, tone, anchor, turn]) => (
        <text
          key={text + y}
          textAnchor={anchor}
          transform={`translate(${x} ${y}) rotate(${turn})`}
          className={"stroke-[#fafafa] stroke-4 font-['Roboto',sans-serif] [paint-order:stroke] [stroke-linejoin:round] " + TONES[tone]}
        >
          {text}
        </text>
      ))}

      <Interstate x={1953} y={993} n="70" />
      <Interstate x={1784} y={1042} n="70" />
      <Interstate x={1982} y={1142} n="670" />
      <Interstate x={2114} y={1142} n="35" />
      <Interstate x={2141} y={1217} n="35" />
      <Interstate x={2581} y={1184} n="70" />
      <Interstate x={2099} y={1437} n="35" />
      <Interstate x={1828} y={1532} n="35" />
      <Interstate x={2846} y={1535} n="70" />
      <UsShield x={1752} y={1517} n="169" />
      <UsShield x={2460} y={1430} n="71" />
      <UsShield x={2489} y={1746} n="71" />

      <Place x={1952} y={1227} color="#ab6bf5" glyph="camera" />
      <Place x={2251} y={953} color="#ab6bf5" glyph="museum" />
      <Place x={2469} y={1224} color="#ab6bf5" glyph="museum" />
      <Place x={2677} y={1117} color="#ee8a3f" glyph="food" />
      <Place x={2814} y={1181} color="#ee8a3f" glyph="food" />
      <Place x={2568} y={1745} color="#4596f7" glyph="cart" />

      <path
        d="M2218 975L2203 1311 2116 1349 2329 1040 2231 1150M2231 1150L2237 1170 2244 1290 1964 1768 2199 1792 2190 1830M2146 1800L2270 1238 2310 1405 2502 1805"
        fill="none" stroke="#4f9bd9" strokeWidth="6" strokeLinejoin="round"
      />
      <circle cx="2231" cy="1125" r="47" fill="#4f9bd9" opacity="0.350" />
      <circle cx="2231" cy="1125" r="39" fill="#4f9bd9" opacity="0.500" />
      <circle cx="2231" cy="1123" r="31" fill="#4f9bd9" />
      <text x="2231" y="1131" textAnchor="middle" className="fill-white font-['Roboto',sans-serif] text-[22px] font-bold">2</text>
      <circle cx="2218" cy="954" r="26" fill="#fff" stroke="#62d44d" strokeWidth="5" />
      <path d="M2213 941l14 13-14 9z" fill="#62d44d" />

      <StopPin x={2270} y={1197} n="10" />
      <StopPin x={2244} y={1249} n="6" />
      <StopPin x={2203} y={1270} n="1" />
      <StopPin x={2116} y={1307} n="2" />
      <StopPin x={2329} y={995} n="3" />
      <StopPin x={2310} y={1363} n="11" />
      <StopPin x={1964} y={1725} n="7" />
      <StopPin x={2199} y={1749} n="8" />
    </svg>
  );
}

function Switch({ children }) {
  return (
    <label className="flex items-center gap-[15px]">
      <span className="flex h-5 w-[58px] items-center rounded-full bg-[linear-gradient(to_right,transparent_10px,#ebebeb_10px)]">
        <input type="checkbox" role="switch" className="size-8 appearance-none rounded-full bg-white shadow-[0_2px_4px_rgba(0,0,0,0.25)]" />
      </span>
      {children}
    </label>
  );
}

function MapPanel() {
  return (
    <div className="relative mt-11 -mr-0.5 ml-0.5 min-h-0 flex-1 overflow-hidden rounded-t-2xl">
      <RouteMap />
      <div className="absolute top-[22px] left-[22px] flex h-[82px] items-center gap-[18px] rounded-2xl bg-white pr-[11px] pl-[12px] text-[32px] shadow-[0_2px_6px_rgba(0,0,0,0.3)]">
        <Switch>Road view</Switch>
        <Switch>Hold view</Switch>
        <div className="ml-3.5 flex gap-2.5 text-[26px] font-medium text-[#a3a3a3]">
          <button type="button" disabled className="h-[61px] rounded-[18px] bg-[#ebebeb] px-5">Move to route</button>
          <button type="button" disabled className="h-[61px] rounded-[18px] bg-[#ebebeb] px-5">Create route</button>
        </div>
      </div>
      <button type="button" aria-label="Full screen" className="absolute top-5 right-5 flex size-20 items-center justify-center rounded-sm bg-white text-[#666666] shadow-[0_1px_4px_rgba(0,0,0,0.3)]">
        <MdFullscreen className="size-[62px]" />
      </button>
      <button type="button" aria-label="Ask the assistant" className="absolute right-5 bottom-12 size-[120px] rounded-full shadow-[0_6px_16px_rgba(0,0,0,0.35)]">
        <SparkleBall variant="large" className="size-full" />
      </button>
    </div>
  );
}

function SummaryPanel() {
  return (
    <section className="flex min-h-0 min-w-0 flex-col overflow-visible text-[28px] leading-[52px]">
      <div className="-mt-5 shrink-0">
        <SummaryHeading>Emissions</SummaryHeading>
        <dl className={"mt-3.5 px-10 py-[35px] " + SOFT}>
          <Metric label="Planned emissions:">277.38 g</Metric>
        </dl>
        <div className="mt-[17px]"><SummaryHeading>Capacity</SummaryHeading></div>
        <div className="mt-3 flex items-center rounded-2xl bg-white py-[19px] shadow-[0_2px_2px_rgba(0,0,0,0.35),0_1px_4px_rgba(0,0,0,0.15)]">
          <dl className="grid flex-1 grid-cols-2 pl-10">
            <Metric label="Peak weight:">16.5 lb</Metric>
            <Metric label="Weight capacity:">22046.2 lb</Metric>
            <Metric label="Peak volume:">16.5 ft3</Metric>
            <Metric label="Volume capacity:">10594.41 ft3</Metric>
          </dl>
          <button type="button" aria-label="Expand capacity" className="flex size-12 items-center justify-center text-[#2f2f2f]">
            <MdExpandMore className="size-12" />
          </button>
        </div>
        <div className="mt-9"><SummaryHeading>Planned costs</SummaryHeading></div>
        <dl className={"mt-3.5 grid grid-cols-2 py-[19px] pr-[50px] pl-10 " + SOFT}>
          <Metric label="Driver time:">USD 16.29</Metric>
          <Metric label="Total:">USD 478.90</Metric>
          <Metric label="Vehicle time:">USD 16.29</Metric>
          <Metric label="Average per stop:">USD 43.54</Metric>
          <Metric label="Vehicle mileage:">USD 446.31</Metric>
        </dl>
      </div>
      <MapPanel />
    </section>
  );
}

export default function App() {
  return (
    <div className="flex h-screen flex-col overflow-hidden bg-[#f4f4f4] font-['Noto_Sans',sans-serif] text-[#1f1f1f]">
      <Header />
      <div className="flex min-h-0 flex-1">
        <Sidebar />
        <main className="grid min-h-0 min-w-0 flex-1 grid-cols-[1537fr_24px_1135fr] pr-8 pl-[30px]">
          <StopsPanel />
          <div className="flex flex-col items-end pt-[1142px]" aria-hidden="true">
            <div className="mr-2 h-24 w-1.5 rounded-full bg-[#d6d6d6]" />
          </div>
          <SummaryPanel />
        </main>
      </div>
    </div>
  );
}
